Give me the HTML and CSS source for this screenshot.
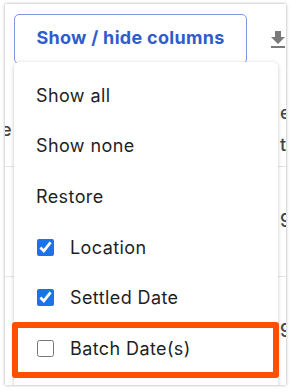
FILE: index.html
```html
<!DOCTYPE html>
<html lang="en">
<head>
    <meta charset="UTF-8">
    <meta name="viewport" content="width=device-width, initial-scale=1.0">
    <title>Show / hide columns</title>
    <link rel="stylesheet" href="styles.css">
</head>
<body>
    <div class="window">
        <div class="toolbar">
            <button class="btn-columns">Show / hide columns</button>
            <span class="download">
                <svg width="16" height="20" viewBox="0 0 16 20">
                    <path d="M5 2h6v6h4l-7 7-7-7h4z" fill="#7a7a7a"/>
                    <rect x="1" y="17" width="14" height="2" fill="#7a7a7a"/>
                </svg>
            </span>
        </div>

        <div class="table">
            <div class="row head">
                <span class="cell-left">e</span>
                <span class="cell-right">e<br>t</span>
            </div>
            <div class="row">
                <span class="cell-left"></span>
                <span class="cell-right">9</span>
            </div>
            <div class="row">
                <span class="cell-left"></span>
                <span class="cell-right">9</span>
            </div>
        </div>

        <div class="menu">
            <div class="menu-item">Show all</div>
            <div class="menu-item">Show none</div>
            <div class="menu-item">Restore</div>
            <label class="menu-item check"><input type="checkbox" checked> Location</label>
            <label class="menu-item check"><input type="checkbox" checked> Settled Date</label>
            <label class="menu-item check"><input type="checkbox"> Batch Date(s)</label>
        </div>

        <div class="highlight"></div>
    </div>
</body>
</html>
```

FILE: styles.css
```css
* {
    margin: 0;
    padding: 0;
    box-sizing: border-box;
}

body {
    font-family: Inter, 'Noto Sans', sans-serif;
    background: #fff;
    padding: 4px 6px 7px 5px;
    height: 392px;
}

.window {
    position: relative;
    height: 381px;
    background: #fff;
    overflow: hidden;
    box-shadow: 0 0 3px rgba(0, 0, 0, 0.35);
}

.toolbar {
    display: flex;
    align-items: flex-start;
    padding: 10px 0 0 9px;
    gap: 23px;
}

.btn-columns {
    width: 235px;
    height: 50px;
    border: 1px solid #7d98de;
    border-radius: 5px;
    background: #fff;
    color: #2f5ccc;
    font-family: Inter, 'Noto Sans', sans-serif;
    font-size: 18px;
    font-weight: 700;
    letter-spacing: 0.3px;
    padding-bottom: 4px;
}

.download {
    padding-top: 15px;
}

.table {
    margin-top: 36px;
}

.row {
    display: flex;
    justify-content: space-between;
    height: 110px;
    border-bottom: 1px solid #e4e4e4;
    color: #444;
    font-size: 18px;
    font-weight: 500;
    line-height: 32px;
}

.row.head {
    height: 70px;
    margin-top: -3px;
    padding-top: 0;
}

.row.head .cell-left {
    padding-top: 17px;
}

.row:not(.head) {
    padding-top: 38px;
}

.cell-left {
    margin-left: -4px;
}

.cell-right {
    margin-right: -4px;
    width: 10px;
}

.menu {
    position: absolute;
    left: 9px;
    top: 58px;
    width: 264px;
    height: 340px;
    background: #fff;
    border-radius: 5px;
    box-shadow: 0 1px 4px rgba(0, 0, 0, 0.22);
    padding-top: 8px;
}

.menu-item {
    display: flex;
    align-items: center;
    height: 50.6px;
    padding-left: 22px;
    font-size: 18px;
    letter-spacing: 0.4px;
    color: #1f1f1f;
}

.menu-item.check {
    gap: 16px;
}

.menu-item input {
    width: 17px;
    height: 17px;
    margin-left: 1px;
    accent-color: #1a73e8;
}

.highlight {
    position: absolute;
    left: 7px;
    top: 318px;
    width: 267px;
    height: 56px;
    border: 6px solid #ff4f00;
    border-radius: 3px;
}
```
